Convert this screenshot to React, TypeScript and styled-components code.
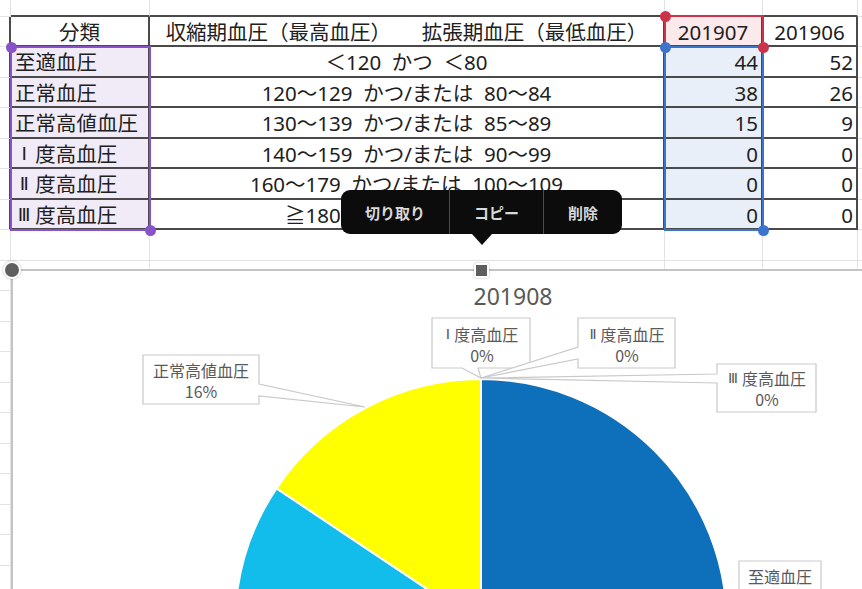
import React from "react";
import styled, { createGlobalStyle } from "styled-components";

const colors = {
  grid: "#e2e2e2",
  rule: "#4a4a4a",
  text: "#202020",
  purple: "#8953c8",
  purpleFill: "#f1ebf8",
  red: "#c9344b",
  redFill: "#fce9ec",
  blue: "#3d74cb",
  blueFill: "#e9eff9",
  chartText: "#595959",
  chartLine: "#c9c9c9",
  frame: "#c4c4c4",
  handle: "#5e5e5e",
  menu: "#0c0c0c",
};

const GlobalStyle = createGlobalStyle`
  html, body {
    margin: 0;
    padding: 0;
    background: #fff;
    overflow: hidden;
  }
  body {
    font-family: "Noto Sans", "Noto Sans CJK JP", sans-serif;
  }
`;

type Line = "none" | "grid" | "rule";
type Align = "left" | "center" | "right";

const lineCss = (l: Line) =>
  l === "rule" ? `2px solid ${colors.rule}` : l === "grid" ? `1px solid ${colors.grid}` : "0";

const Page = styled.div`
  position: relative;
  width: 862px;
  height: 589px;
  overflow: hidden;
  background: #fff;
`;

const Sheet = styled.div`
  display: grid;
  grid-template-columns: 11px 139px 515px 98px 95px 4px;
  grid-template-rows: 17px 30px;
  grid-auto-rows: 30.5px;
`;

const Cell = styled.div<{ $right: Line; $bottom: Line; $fill?: string; $align: Align }>`
  box-sizing: border-box;
  display: flex;
  align-items: center;
  justify-content: ${(p) =>
    p.$align === "left" ? "flex-start" : p.$align === "right" ? "flex-end" : "center"};
  padding: 2px ${(p) => (p.$align === "right" ? "3px" : "0")} 0
    ${(p) => (p.$align === "left" ? "4px" : "0")};
  background: ${(p) => p.$fill ?? "transparent"};
  border-right: ${(p) => lineCss(p.$right)};
  border-bottom: ${(p) => lineCss(p.$bottom)};
  white-space: pre;
  overflow: hidden;
  font-size: 20.5px;
  line-height: 1;
  color: ${colors.text};
`;

// roman numeral prefix of a category name (Ⅰ, Ⅱ, Ⅲ) drawn in a fixed full-width slot
const Numeral = styled.span`
  display: inline-block;
  width: 1em;
  text-align: center;
  font-family: "DejaVu Sans", "Noto Sans CJK JP", sans-serif;
  font-size: 0.9em;
  margin-right: 0.1em;
`;

// a coloured range reference with its two corner handles
const RangeBox = styled.div<{ $x: number; $y: number; $w: number; $h: number; $color: string; $open?: boolean }>`
  position: absolute;
  box-sizing: border-box;
  left: ${(p) => p.$x - 1}px;
  top: ${(p) => p.$y - 1}px;
  width: ${(p) => p.$w + 2}px;
  height: ${(p) => p.$h + 2}px;
  border: 2px solid ${(p) => p.$color};
  ${(p) => (p.$open ? "border-bottom-color: transparent;" : "")}
  pointer-events: none;

  &::before,
  &::after {
    content: "";
    position: absolute;
    z-index: 1;
    width: 11px;
    height: 11px;
    border-radius: 50%;
    background: ${(p) => p.$color};
  }
  &::before {
    left: -6.5px;
    top: -6.5px;
  }
  &::after {
    right: -6.5px;
    bottom: -6.5px;
  }
`;

const ContextMenu = styled.div`
  position: absolute;
  left: 341px;
  top: 190px;
  height: 44px;
  display: flex;
  align-items: stretch;
  background: ${colors.menu};
  border-radius: 9px;

  &::after {
    content: "";
    position: absolute;
    left: 50%;
    bottom: -11px;
    margin-left: -10px;
    border-left: 10px solid transparent;
    border-right: 10px solid transparent;
    border-top: 11px solid ${colors.menu};
  }
`;

const MenuItem = styled.div`
  display: flex;
  align-items: center;
  padding: 0 24px;
  color: #d9d9d9;
  font-family: "Noto Sans CJK JP", sans-serif;
  font-weight: 700;
  font-size: 15px;

  & + & {
    border-left: 1px solid #4b4b4b;
  }
`;

// chart object floating over the sheet; knob and grip are its selection handles
const ChartFrame = styled.div`
  position: absolute;
  left: 11px;
  top: 269px;
  width: 1004px;
  height: 340px;
  background: #fff;
  box-shadow: inset 2px 2px 0 ${colors.frame};

  &::before,
  &::after {
    content: "";
    position: absolute;
    z-index: 2;
    background: ${colors.handle};
    border: 2px solid #fff;
    box-shadow: 0 0 2px rgba(0, 0, 0, 0.35);
  }
  &::before {
    left: -8px;
    top: -8px;
    width: 14px;
    height: 14px;
    border-radius: 50%;
  }
  &::after {
    left: 463px;
    top: -6px;
    width: 11px;
    height: 11px;
    border-radius: 2px;
  }
`;

const ChartTitle = styled.div`
  position: relative;
  margin-top: 13px;
  text-align: center;
  font-family: "Noto Sans", sans-serif;
  font-size: 23px;
  line-height: 28px;
  color: ${colors.chartText};
`;

const Plot = styled.svg`
  position: absolute;
  left: 0;
  top: 0;
`;

const LabelText = styled.text`
  font-family: "Noto Sans CJK JP", sans-serif;
  font-size: 16px;
  fill: ${colors.chartText};
`;

const LabelNumeral = styled.tspan`
  font-family: "DejaVu Sans", "Noto Sans CJK JP", sans-serif;
  font-size: 14.5px;
`;

const rows = [
  { name: "至適血圧", range: "＜120  かつ  ＜80", jul: 44, jun: 52 },
  { name: "正常血圧", range: "120～129  かつ/または  80～84", jul: 38, jun: 26 },
  { name: "正常高値血圧", range: "130～139  かつ/または  85～89", jul: 15, jun: 9 },
  { name: "Ⅰ度高血圧", range: "140～159  かつ/または  90～99", jul: 0, jun: 0 },
  { name: "Ⅱ度高血圧", range: "160～179  かつ/または  100～109", jul: 0, jun: 0 },
  { name: "Ⅲ度高血圧", range: "≧180  かつ/または  ≧110", jul: 0, jun: 0 },
];

const header = ["分類", "収縮期血圧（最高血圧）　　拡張期血圧（最低血圧）", "201907", "201906"];

const ROW_COUNT = 20;
const LAST_TABLE_ROW = rows.length + 1;

const ROMAN = /^[ⅠⅡⅢ]/;

function renderName(name: string) {
  if (!ROMAN.test(name)) return name;
  return (
    <>
      <Numeral>{name[0]}</Numeral>
      {name.slice(1)}
    </>
  );
}

function renderLabel(name: string) {
  if (!ROMAN.test(name)) return name;
  return (
    <>
      <LabelNumeral>{name[0]}</LabelNumeral>
      <tspan dx={4}>{name.slice(1)}</tspan>
    </>
  );
}

function cellContent(r: number, c: number): { text: React.ReactNode; align: Align } {
  if (r === 1 && c >= 1 && c <= 4) return { text: header[c - 1], align: "center" };
  if (r >= 2 && r <= LAST_TABLE_ROW) {
    const row = rows[r - 2];
    if (c === 1) return { text: renderName(row.name), align: "left" };
    if (c === 2) return { text: row.range, align: "center" };
    if (c === 3) return { text: String(row.jul), align: "right" };
    if (c === 4) return { text: String(row.jun), align: "right" };
  }
  return { text: "", align: "center" };
}

function cellFill(r: number, c: number) {
  if (r === 1 && c === 3) return colors.redFill;
  if (r >= 2 && r <= LAST_TABLE_ROW && c === 1) return colors.purpleFill;
  if (r >= 2 && r <= LAST_TABLE_ROW && c === 3) return colors.blueFill;
  return undefined;
}

function cellLines(r: number, c: number): { right: Line; bottom: Line } {
  const tableCol = c >= 1 && c <= 4;
  const bottom: Line = tableCol && r <= LAST_TABLE_ROW ? "rule" : "grid";
  let right: Line = r >= 1 && r <= LAST_TABLE_ROW && c <= 4 ? "rule" : "grid";
  if (c === 5) right = "none";
  return { right, bottom };
}

// pie geometry (page coordinates)
const CX = 481;
const CY = 625;
const R = 246;

const pie = [
  { name: "至適血圧", value: 48, color: "#0e70ba" },
  { name: "正常血圧", value: 33, color: "#13bdeb" },
  { name: "正常高値血圧", value: 15, color: "#ffff00" },
  { name: "Ⅰ度高血圧", value: 0, color: "#7f7f7f" },
  { name: "Ⅱ度高血圧", value: 0, color: "#7f7f7f" },
  { name: "Ⅲ度高血圧", value: 0, color: "#7f7f7f" },
];
const total = pie.reduce((s, p) => s + p.value, 0);

const polar = (deg: number) => {
  const a = (deg * Math.PI) / 180;
  return [CX + R * Math.sin(a), CY - R * Math.cos(a)];
};

const slicePath = (a0: number, a1: number) => {
  const [x0, y0] = polar(a0);
  const [x1, y1] = polar(a1);
  const large = a1 - a0 > 180 ? 1 : 0;
  return `M${CX},${CY} L${x0},${y0} A${R},${R} 0 ${large} 1 ${x1},${y1} Z`;
};

const pct = (name: string) => {
  const p = pie.find((s) => s.name === name)!;
  return `${Math.round((p.value / total) * 100)}%`;
};

const callouts = [
  { name: "正常高値血圧", d: "M143,355 H259 V384 L365,407 L259,396 V404 H143 Z", x: 201, y: 369.5, pct: true },
  { name: "Ⅰ度高血圧", d: "M432,318 H530 V368 H478 L481,378 L462,368 H432 Z", x: 482, y: 334, pct: true },
  { name: "Ⅱ度高血圧", d: "M578,318 H675 V368 H578 V359 L481,378 L578,347 Z", x: 627, y: 334, pct: true },
  { name: "Ⅲ度高血圧", d: "M717,364 H816 V412 H717 V383 L481,378 L717,374 Z", x: 767, y: 378, pct: true },
  { name: "至適血圧", d: "M739,561 H821 V620 H739 Z", x: 780, y: 576, pct: false },
];

export default function App() {
  const cells: React.ReactNode[] = [];
  for (let r = 0; r < ROW_COUNT; r++) {
    for (let c = 0; c < 6; c++) {
      const { text, align } = cellContent(r, c);
      const { right, bottom } = cellLines(r, c);
      cells.push(
        <Cell key={`${r}-${c}`} $right={right} $bottom={bottom} $fill={cellFill(r, c)} $align={align}>
          {text}
        </Cell>
      );
    }
  }

  let angle = 0;
  const slices = pie.map((s) => {
    const a0 = angle;
    angle += (s.value / total) * 360;
    return { ...s, a0, a1: angle };
  });

  return (
    <>
      <GlobalStyle />
      <Page>
        <Sheet>{cells}</Sheet>

        <RangeBox $x={11} $y={47} $w={139} $h={183} $color={colors.purple} />
        <RangeBox $x={665} $y={47} $w={98} $h={183} $color={colors.blue} />
        <RangeBox $x={665} $y={16} $w={98} $h={31} $color={colors.red} $open />

        <ContextMenu>
          <MenuItem>切り取り</MenuItem>
          <MenuItem>コピー</MenuItem>
          <MenuItem>削除</MenuItem>
        </ContextMenu>

        <ChartFrame>
          <Plot width={1004} height={320} viewBox="11 269 1004 320">
            {slices
              .filter((s) => s.value > 0)
              .map((s) => (
                <path key={s.name} d={slicePath(s.a0, s.a1)} fill={s.color} stroke="#fff" strokeWidth={2} />
              ))}
            <line x1={CX} y1={CY} x2={CX} y2={CY - R} stroke="#fff" strokeWidth={2} />
            {callouts.map((co) => (
              <g key={co.name}>
                <path d={co.d} fill="#fff" stroke={colors.chartLine} strokeWidth={1.2} />
                <LabelText x={co.x} y={co.y} textAnchor="middle" dominantBaseline="central">
                  {renderLabel(co.name)}
                </LabelText>
                {co.pct && (
                  <LabelText x={co.x} y={co.y + 21} textAnchor="middle" dominantBaseline="central">
                    {pct(co.name)}
                  </LabelText>
                )}
              </g>
            ))}
          </Plot>
          <ChartTitle>201908</ChartTitle>
        </ChartFrame>
      </Page>
    </>
  );
}
